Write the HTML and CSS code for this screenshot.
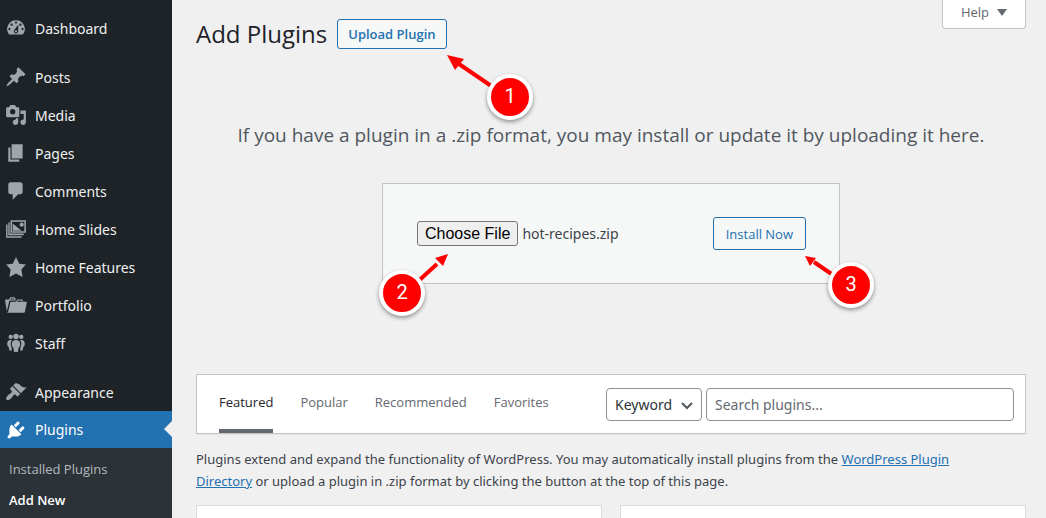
FILE: index.html
```html
<!DOCTYPE html>
<html lang="en">

<head>
    <meta charset="UTF-8">
    <meta name="viewport" content="width=device-width, initial-scale=1.0">
    <title>Add Plugins</title>
    <link rel="stylesheet" href="styles.css">
</head>

<body>
    <nav class="sidebar">
        <ul class="menu">
            <li><a href="#">
                <svg viewBox="0 0 20 20"><path d="M3.76 16h12.48A7.998 7.998 0 0010 3a7.998 7.998 0 00-6.24 13zM10 4c.55 0 1 .45 1 1s-.45 1-1 1-1-.45-1-1 .45-1 1-1zM6 6c.55 0 1 .45 1 1s-.45 1-1 1-1-.45-1-1 .45-1 1-1zm8 0c.55 0 1 .45 1 1s-.45 1-1 1-1-.45-1-1 .45-1 1-1zm-5.37 5.55L12 7v6c0 1.1-.9 2-2 2s-2-.9-2-2c0-.57.24-1.08.63-1.45zM4 10c.55 0 1 .45 1 1s-.45 1-1 1-1-.45-1-1 .45-1 1-1zm12 0c.55 0 1 .45 1 1s-.45 1-1 1-1-.45-1-1 .45-1 1-1zm-5 3c0-.55-.45-1-1-1s-1 .45-1 1 .45 1 1 1 1-.45 1-1z" /></svg>
                Dashboard</a></li>
            <li class="separator"></li>
            <li><a href="#">
                <svg viewBox="0 0 20 20"><path d="M10.44 3.02l1.82-1.82 6.36 6.35-1.83 1.82c-1.05-.68-2.48-.57-3.41.36l-.75.75c-.92.93-1.04 2.35-.35 3.41l-1.83 1.82-2.41-2.41-2.8 2.79c-.42.42-3.38 2.71-3.8 2.29s1.86-3.39 2.28-3.81l2.79-2.79L4.1 9.36l1.83-1.82c1.05.69 2.48.57 3.4-.36l.75-.75c.93-.92 1.05-2.35.36-3.41z" /></svg>
                Posts</a></li>
            <li><a href="#">
                <svg viewBox="0 0 20 20"><path d="M13 11V4c0-.55-.45-1-1-1h-1.67L9 1H5L3.67 3H2c-.55 0-1 .45-1 1v7c0 .55.45 1 1 1h10c.55 0 1-.45 1-1zM7 4.5c1.38 0 2.5 1.12 2.5 2.5S8.38 9.5 7 9.5 4.5 8.38 4.5 7 5.62 4.5 7 4.5zM14 6h5v10.5c0 1.38-1.12 2.5-2.5 2.5S14 17.88 14 16.5s1.12-2.5 2.5-2.5c.17 0 .34.02.5.05V9h-3V6zm-4 8.05V13h2v3.5c0 1.38-1.12 2.5-2.5 2.5S7 17.88 7 16.5 8.12 14 9.5 14c.17 0 .34.02.5.05z" /></svg>
                Media</a></li>
            <li><a href="#">
                <svg viewBox="0 0 20 20"><path d="M6 15V2h10v13H6zm-1 1h8v2H3V5h2v11z" /></svg>
                Pages</a></li>
            <li><a href="#">
                <svg viewBox="0 0 20 20"><path d="M5 2h9c1.1 0 2 .9 2 2v7c0 1.1-.9 2-2 2h-2l-5 5v-5H5c-1.1 0-2-.9-2-2V4c0-1.1.9-2 2-2z" /></svg>
                Comments</a></li>
            <li><a href="#">
                <svg viewBox="0 0 20 20"><path fill-rule="evenodd" d="M5 2h14v11.500H5zM6.400 3.400v8.700h11.200V3.400zM7 11.500V5l8 6.500zM15.200 4.200a1.900 1.900 0 1 0 .01 0zM3 4h1.300v10.200H17v1.500H3zM1 6h1.300v10.500H15V18H1z" /></svg>
                Home Slides</a></li>
            <li><a href="#">
                <svg viewBox="0 0 20 20"><path d="M10 1l3 6 6 .75-4.12 4.62L16 19l-6-3-6 3 1.13-6.63L1 7.750 7 7z" /></svg>
                Home Features</a></li>
            <li><a href="#">
                <svg viewBox="0 0 20 20"><path d="M4 5H.78c-.37 0-.74.32-.69.84l1.56 9.99S3.500 8.470 3.860 6.700c.11-.53.61-.7.98-.7H10s-.7-2.080-.77-2.310C9.110 3.250 8.890 3 8.450 3H5.140c-.36 0-.7.23-.8.64C4.250 4.040 4 5 4 5zm4.880 0h-4s.42-1 .87-1h2.130c.48 0 1 1 1 1zM2.670 16.250c-.31.47-.76.75-1.260.75h15.730c.54 0 .92-.31 1.030-.83.44-2.190 1.680-8.440 1.680-8.440.07-.5-.3-.73-.62-.73H16V5.530c0-.16-.26-.53-.66-.53h-3.760c-.52 0-.87.58-.87.58L10 7H5.590c-.32 0-.63.19-.69.5 0 0-1.590 6.700-1.720 7.330-.07.37-.22.99-.51 1.420zM15.380 7H11s.58-1 1.130-1h2.290c.71 0 .96 1 .96 1z" /></svg>
                Portfolio</a></li>
            <li><a href="#">
                <svg viewBox="0 0 20 20"><circle cx="5.200" cy="4.400" r="2" /><circle cx="14.800" cy="4.400" r="2" /><circle cx="10" cy="4" r="2.500" /><path d="M6.300 7.300C3.500 6.700 1.800 8.200 2 11c.1 1.500.6 2.300 1.300 2.700l.7 2.800c.6.6 1.500.6 2 .3v-3C4.900 12 4.800 9.200 6.300 7.300zM13.700 7.300c2.800-.6 4.500.9 4.300 3.700-.1 1.500-.6 2.300-1.300 2.700l-.7 2.800c-.6.600-1.500.600-2 .3v-3c1.100-1.800 1.200-4.600-.3-6.500zM10 7.200c-2.600 0-3.900 1.500-3.800 4 .1 1.500.6 2.500 1.400 3.100l.5 3.500c1.100.7 2.700.7 3.800 0l.5-3.500c.8-.6 1.300-1.600 1.400-3.100.1-2.500-1.200-4-3.800-4z" /></svg>
                Staff</a></li>
            <li class="separator"></li>
            <li><a href="#">
                <svg viewBox="0 0 20 20"><path d="M14.480 11.060L7.410 3.990l1.500-1.500c.5-.56 2.300-.47 3.510.32 1.210.8 1.430 1.280 2.910 2.100 1.180.64 2.450 1.260 4.450.85zm-.71.71L6.700 4.700 4.930 6.470c-.39.39-.39 1.020 0 1.410l1.060 1.060c.39.39.39 1.030 0 1.420-.6.6-1.430 1.110-2.210 1.690-.35.26-.7.53-1.010.84C1.430 14.230.4 16.080 1.400 17.070c.99 1 2.840-.03 4.180-1.360.31-.31.58-.66.85-1.020.57-.78 1.080-1.610 1.690-2.210.39-.39 1.020-.39 1.410 0l1.060 1.060c.39.39 1.020.39 1.410 0z" /></svg>
                Appearance</a></li>
            <li class="current"><a href="#">
                <svg viewBox="0 0 20 20"><path d="M13.110 4.360L9.870 7.600 8 5.730l3.240-3.240c.35-.34 1.050-.2 1.560.32.52.51.66 1.210.31 1.550zm-8 1.770l.91-1.120 9.010 9.010-1.190.84c-.71.71-2.630 1.160-3.820 1.160H6.140L4.900 17.260c-.59.59-1.540.59-2.120 0-.59-.58-.59-1.530 0-2.120l1.240-1.240v-3.880c0-1.130.4-3.190 1.090-3.890zm7.260 3.970l3.240-3.240c.34-.35 1.040-.21 1.550.31.52.51.66 1.210.31 1.550l-3.240 3.250z" /></svg>
                Plugins</a></li>
        </ul>
        <ul class="submenu">
            <li><a href="#">Installed Plugins</a></li>
            <li><a href="#" class="active">Add New</a></li>
        </ul>
    </nav>

    <main class="content">
        <div class="header">
            <div class="heading">
                <h1>Add Plugins</h1>
                <div class="anchor">
                    <button class="button upload" type="button">Upload Plugin</button>
                    <svg class="callout callout-upload" width="100" height="80" viewBox="0 0 100 80">
                        <path class="shaft" d="M70 48L20 14" />
                        <path class="tip" d="M8 5L25 9L16 20z" />
                        <circle class="badge" cx="71" cy="47" r="21" />
                        <text x="71" y="53">1</text>
                    </svg>
                </div>
            </div>
            <button class="help" type="button">Help <span class="arrow"></span></button>
        </div>

        <section class="upload-plugin">
            <p>If you have a plugin in a .zip format, you may install or update it by uploading it here.</p>
            <form class="upload-form">
                <div class="anchor file">
                    <input type="file" id="pluginzip" aria-label="Plugin zip file" accept=".zip">
                    <svg class="callout callout-file" width="90" height="90" viewBox="0 0 90 90">
                        <path class="shaft" d="M32 50L67 18" />
                        <path class="tip" d="M78 8L73 20L65 12z" />
                        <circle class="badge" cx="32" cy="47" r="21" />
                        <text x="32" y="53">2</text>
                    </svg>
                </div>
                <div class="anchor">
                    <button class="button install" type="submit">Install Now</button>
                    <svg class="callout callout-install" width="90" height="80" viewBox="0 0 90 80">
                        <path class="shaft" d="M55 38L17 12" />
                        <path class="tip" d="M8 6L19 8L13 16z" />
                        <circle class="badge" cx="54" cy="35" r="21" />
                        <text x="54" y="41">3</text>
                    </svg>
                </div>
            </form>
        </section>

        <div class="filter">
            <div class="tabs">
                <a href="#" class="active">Featured</a>
                <a href="#">Popular</a>
                <a href="#">Recommended</a>
                <a href="#">Favorites</a>
            </div>
            <form class="search">
                <div class="select">
                    <select aria-label="Search plugins by">
                        <option>Keyword</option>
                        <option>Author</option>
                        <option>Tag</option>
                    </select>
                    <svg class="chevron" width="14" height="10" viewBox="0 0 14 10"><path d="M2 2l5 5 5-5" /></svg>
                </div>
                <input type="search" placeholder="Search plugins..." aria-label="Search plugins">
            </form>
        </div>

        <p class="intro">Plugins extend and expand the functionality of WordPress. You may automatically install plugins from the <a href="#">WordPress Plugin Directory</a> or upload a plugin in .zip format by clicking the button at the top of this page.</p>

        <div class="cards">
            <div class="card"></div>
            <div class="card"></div>
        </div>
    </main>

    <script>
        // preselect the zip
        const transfer = new DataTransfer();
        transfer.items.add(new File([''], 'hot-recipes.zip', { type: 'application/zip' }));
        document.getElementById('pluginzip').files = transfer.files;
    </script>
</body>

</html>
```
FILE: styles.css
```css
* {
    box-sizing: border-box;
}

body {
    margin: 0;
    display: flex;
    height: 100vh;
    overflow: hidden;
    background-color: #f0f0f1;
    color: #3c434a;
    font-family: "Open Sans", "Noto Sans", sans-serif;
    font-size: 13px;
}

button,
input,
select {
    font-family: inherit;
}

/* sidebar */
.sidebar {
    flex: none;
    display: flex;
    flex-direction: column;
    width: 172px;
    padding-top: 9px;
    background-color: #1d2327;
}

.sidebar ul {
    list-style: none;
    margin: 0;
    padding: 0;
}

.menu a {
    display: flex;
    align-items: center;
    gap: 8px;
    height: 38px;
    padding-left: 5px;
    color: #f0f0f1;
    font-family: "Noto Sans", "Open Sans", sans-serif;
    font-size: 14px;
    text-decoration: none;
}

.menu svg {
    width: 22px;
    height: 22px;
    fill: #a0a5aa;
}

.menu .separator {
    height: 11px;
}

.menu .current {
    position: relative;
    background-color: #2271b1;
}

.menu .current a {
    height: 37px;
    color: #fff;
}

.menu .current svg {
    fill: #fff;
}

.menu .current::after {
    content: "";
    position: absolute;
    right: 0;
    top: 10px;
    border: 8px solid transparent;
    border-right-color: #f0f0f1;
    border-left: 0;
}

.sidebar .submenu {
    flex: 1;
    padding: 6px 9px;
    background-color: #2c3338;
}

.submenu a {
    display: block;
    color: #b4b9be;
    font-size: 13px;
    line-height: 31px;
    text-decoration: none;
}

.submenu .active {
    color: #fff;
    font-weight: 600;
}

/* main column */
.content {
    flex: 1;
    display: flex;
    flex-direction: column;
    min-width: 0;
    padding: 0 20px 0 24px;
}

.header {
    display: flex;
    justify-content: space-between;
    align-items: flex-start;
}

.heading {
    display: flex;
    align-items: center;
    gap: 10px;
    padding-top: 17px;
}

h1 {
    margin: 0;
    color: #1d2327;
    font-size: 24px;
    font-weight: 400;
    line-height: 34px;
}

.button {
    border: 1px solid #2271b1;
    border-radius: 3px;
    background-color: #f6f7f7;
    color: #2271b1;
    cursor: pointer;
}

.upload {
    display: block;
    height: 30px;
    padding: 0 10px;
    font-size: 13px;
    font-weight: 600;
}

.install {
    display: block;
    height: 33px;
    padding: 0 12px;
    font-size: 13px;
}

.help {
    display: flex;
    align-items: center;
    gap: 8px;
    height: 29px;
    padding: 0 18px 4px;
    border: 1px solid #c3c4c7;
    border-top: 0;
    border-radius: 0 0 4px 4px;
    background-color: #fff;
    color: #646970;
    font-size: 13px;
}

.arrow {
    border: 5px solid transparent;
    border-top: 7px solid #646970;
    border-bottom: 0;
}

/* upload box */
.upload-plugin {
    display: flex;
    flex-direction: column;
    align-items: center;
    padding: 69px 0 90px;
}

.upload-plugin p {
    margin: 0 0 33px;
    color: #50575e;
    font-size: 19px;
    line-height: 30px;
}

.upload-form {
    display: flex;
    justify-content: space-between;
    align-items: center;
    width: 100%;
    max-width: 458px;
    padding: 33px 33px 33px 34px;
    border: 1px solid #c3c4c7;
    background-color: #f6f7f7;
}

.anchor {
    position: relative;
}

.file input {
    display: block;
    width: 270px;
    color: #3c434a;
    font-family: "Noto Sans", "Open Sans", sans-serif;
    font-size: 14px;
}

.file input::file-selector-button {
    height: 25px;
    padding: 0 7px;
    border: 1px solid #767676;
    border-radius: 3px;
    background-color: #efefef;
    color: #000;
    font-family: "Liberation Sans", Arial, sans-serif;
    font-size: 16px;
}

/* numbered markers */
.callout {
    position: absolute;
    z-index: 1;
    overflow: visible;
    pointer-events: none;
}

.callout-upload {
    left: 102px;
    top: 31px;
}

.callout-file {
    left: -47px;
    top: 25px;
}

.callout-install {
    left: 84px;
    top: 33px;
}

.shaft {
    stroke: #f00;
    stroke-width: 4;
}

.tip {
    fill: #f00;
}

.badge {
    fill: #f00;
    stroke: #fff;
    stroke-width: 4;
    filter: drop-shadow(0 2px 2px rgba(0, 0, 0, 0.4));
}

.callout text {
    fill: #fff;
    font-family: Roboto, Arial, sans-serif;
    font-size: 20px;
    text-anchor: middle;
}

/* filter bar */
.filter {
    display: flex;
    justify-content: space-between;
    align-items: center;
    height: 60px;
    padding: 0 11px 0 22px;
    border: 1px solid #c3c4c7;
    background-color: #fff;
    box-shadow: 0 1px 1px rgba(0, 0, 0, 0.04);
}

.tabs {
    display: flex;
    align-self: stretch;
    gap: 27px;
}

.tabs a {
    border-bottom: 4px solid transparent;
    color: #646970;
    font-size: 13px;
    line-height: 54px;
    text-decoration: none;
}

.tabs .active {
    border-bottom-color: #646970;
    color: #1d2327;
}

.search {
    display: flex;
    gap: 4px;
}

.select {
    position: relative;
}

.search select,
.search input {
    height: 33px;
    border: 1px solid #8c8f94;
    border-radius: 4px;
    background-color: #fff;
    color: #2c3338;
    font-family: "Noto Sans", "Open Sans", sans-serif;
    font-size: 14px;
}

.search select {
    appearance: none;
    width: 96px;
    padding: 0 8px;
}

.chevron {
    position: absolute;
    right: 8px;
    top: 13px;
    fill: none;
    stroke: #50575e;
    stroke-width: 2;
    pointer-events: none;
}

.search input {
    width: 308px;
    padding: 0 8px;
}

.search input::placeholder {
    color: #646970;
}

.intro {
    margin: 14px 0 13px;
    padding-right: 40px;
    font-family: "Noto Sans", "Open Sans", sans-serif;
    line-height: 22px;
}

.intro a {
    color: #2271b1;
}

/* plugin cards */
.cards {
    flex: 1;
    display: grid;
    grid-template-columns: 1fr 1fr;
    gap: 18px;
}

.card {
    border: 1px solid #dcdcde;
    border-bottom: 0;
    background-color: #fff;
}
```
